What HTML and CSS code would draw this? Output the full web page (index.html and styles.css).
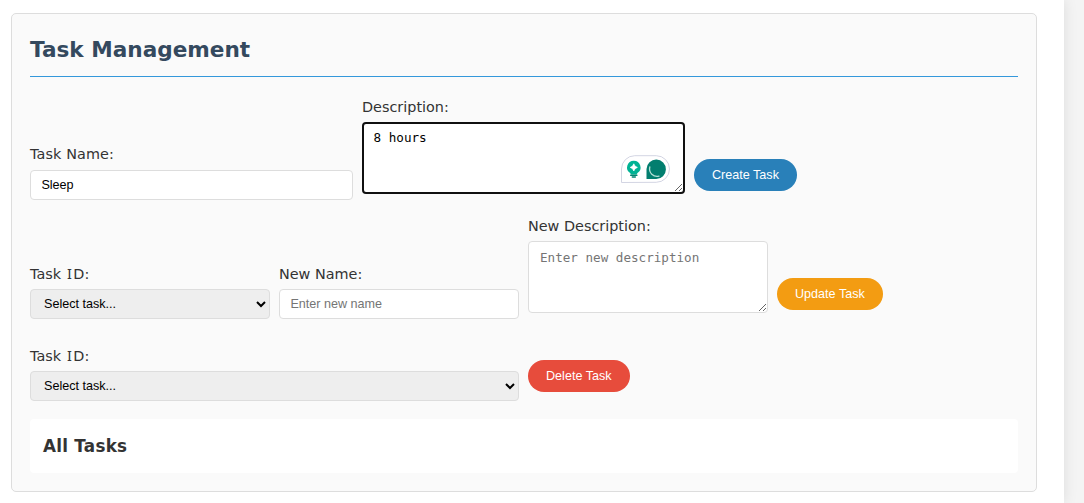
FILE: index.html
```html
<!DOCTYPE html>
<html lang="en">
<head>
<meta charset="utf-8">
<title>Task Management</title>
<link rel="stylesheet" href="styles.css">
</head>
<body>
<main class="container">
  <section class="section">
    <h2 class="section-title">Task Management</h2>
    <form class="row row-create">
      <div class="field wide">
        <label for="name" class="name-label">Task Name:</label>
        <input id="name" type="text" value="Sleep">
      </div>
      <div class="field wide area">
        <label for="desc">Description:</label>
        <textarea id="desc" class="active">8 hours</textarea>
        <div class="assist">
          <svg width="50" height="28" viewBox="0 0 50 28">
            <path d="M.5 27.5V14A13.3 13.3 0 0 1 13.8.7H35.2A13.3 13.3 0 0 1 35.2 27.3Z" fill="#fff" stroke="#d3d5e3"/>
            <path d="M12.800 5.800a6.700 6.700 0 0 0-3.700 12.300l1 1.400h5.400l1-1.400A6.700 6.700 0 0 0 12.800 5.800Z" fill="#00b294"/>
            <path d="M12.800 8.800Q13.500 11.700 16.400 12.400Q13.500 13.100 12.800 16Q12.100 13.100 9.200 12.400Q12.100 11.700 12.800 8.800Z" fill="#fff" stroke="#fff" stroke-width=".7"/>
            <path d="M9.700 20.200h6.200M11.300 22h3" stroke="#008571" stroke-width="1.500" stroke-linecap="round"/>
            <path d="M25.500 24V14A9.700 9.700 0 1 1 35.200 24Z" fill="#027e6f"/>
            <path d="M28.800 12A7.600 7.600 0 0 0 38 21.200" fill="none" stroke="#b4dfd5" stroke-width="1.300" stroke-linecap="round"/>
          </svg>
        </div>
      </div>
      <button type="button" class="btn create">Create Task</button>
    </form>
    <form class="row row-update">
      <div class="field">
        <label for="uid">Task <span class="cap-i">I</span>D:</label>
        <select id="uid"><option>Select task...</option></select>
      </div>
      <div class="field">
        <label for="newname">New Name:</label>
        <input id="newname" type="text" placeholder="Enter new name">
      </div>
      <div class="field area">
        <label for="newdesc">New Description:</label>
        <textarea id="newdesc" placeholder="Enter new description"></textarea>
      </div>
      <button type="button" class="btn update">Update Task</button>
    </form>
    <form class="row row-delete">
      <div class="field full">
        <label for="did">Task <span class="cap-i">I</span>D:</label>
        <select id="did"><option>Select task...</option></select>
      </div>
      <button type="button" class="btn delete">Delete Task</button>
    </form>
    <div class="list">
      <h3>All Tasks</h3>
    </div>
  </section>
</main>
</body>
</html>
```
FILE: styles.css
```css
* { box-sizing: border-box; }
html { overflow: hidden; }
body {
  margin: 0;
  background: #f4f4f4;
  color: #333;
  font: 14.4px/23px "DejaVu Sans", sans-serif;
}
.container {
  width: 1064px;
  height: 503px;
  padding: 13px 27px 11px 11px;
  background: #fff;
  box-shadow: 0 0 13.5px rgba(0, 0, 0, 0.1);
}
.section {
  height: 479px;
  padding: 18px;
  background: #fafafa;
  border: 1px solid #ddd;
  border-radius: 5px;
}
.section-title {
  height: 45px;
  margin: 0;
  border-bottom: 1px solid #3498db;
  color: #34495e;
  font-size: 21.6px;
  line-height: 35px;
}
.row {
  display: flex;
  align-items: flex-end;
  gap: 9px;
}
.row-create { height: 123px; }
.row-update { height: 119px; }
.row-delete { height: 82px; }
.field {
  display: flex;
  flex-direction: column;
  width: 240px;
}
.wide { width: 323px; }
.full { width: 489px; }
.area {
  position: relative;
  padding-bottom: 6px;
}
label {
  height: 23px;
  margin-bottom: 3px;
}
.name-label {
  margin-bottom: 4px;
  letter-spacing: 0.1px;
}
.cap-i {
  font-family: "Noto Sans", sans-serif;
  line-height: 1;
  margin: 0 1.4px;
}
input, select, textarea {
  width: 100%;
  height: 30px;
  margin: 0;
  border: 1px solid #ddd;
  border-radius: 4px;
  font: 12.6px "Liberation Sans", Arial, sans-serif;
}
input, textarea {
  padding: 0 10.4px;
  background: #fff;
  color: #000;
}
select {
  padding: 0 9px;
  background: #eee;
  color: #000;
}
#uid, #did { padding-right: 0; }
textarea {
  display: block;
  height: 72px;
  padding: 8px 11px;
  font-family: "DejaVu Sans Mono", monospace;
  resize: vertical;
}
.active {
  border: 2px solid #101010;
  padding: 6px 9.6px;
}
.assist {
  position: absolute;
  right: 14px;
  bottom: 17px;
  height: 28px;
}
.assist svg { display: block; }
.btn {
  height: 32px;
  margin: 0 0 9px;
  padding: 0 18px;
  border: 0;
  border-radius: 45px;
  color: #fff;
  font: 12.6px "Liberation Sans", Arial, sans-serif;
}
.create { background: #2980b9; }
.update { background: #f39c12; }
.delete { background: #e74c3c; }
.list {
  height: 54px;
  margin-top: 18px;
  padding: 13px;
  background: #fff;
  border-radius: 4px;
}
.list h3 {
  margin: 0;
  font-size: 16.8px;
  line-height: 28px;
  letter-spacing: 0.25px;
}
```
